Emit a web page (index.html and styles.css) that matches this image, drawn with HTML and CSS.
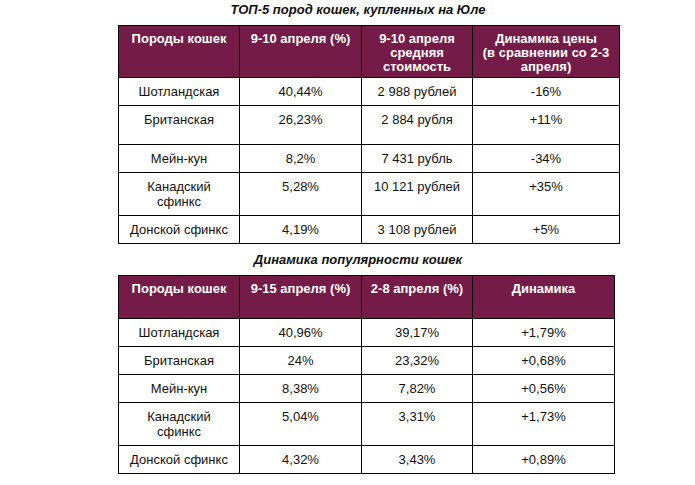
FILE: index.html
```html
<!DOCTYPE html>
<html lang="ru">
<head>
<meta charset="utf-8">
<title>Породы кошек</title>
<link rel="stylesheet" href="styles.css">
</head>
<body>
<div class="page">
  <h2 class="caption caption-first">ТОП-5 пород кошек, купленных на Юле</h2>
  <table class="grid grid-price">
    <colgroup>
      <col class="c1"><col class="c2"><col class="c3"><col class="c4">
    </colgroup>
    <thead>
      <tr class="head head-tall">
        <th>Породы кошек</th>
        <th>9-10 апреля (%)</th>
        <th>9-10 апреля<br>средняя<br>стоимость</th>
        <th>Динамика цены<br>(в сравнении со 2-3<br>апреля)</th>
      </tr>
    </thead>
    <tbody>
      <tr><td>Шотландская</td><td>40,44%</td><td>2 988 рублей</td><td>-16%</td></tr>
      <tr class="row-extra"><td>Британская</td><td>26,23%</td><td>2 884 рубля</td><td>+11%</td></tr>
      <tr><td>Мейн-кун</td><td>8,2%</td><td>7 431 рубль</td><td>-34%</td></tr>
      <tr><td>Канадский<br>сфинкс</td><td>5,28%</td><td>10 121 рублей</td><td>+35%</td></tr>
      <tr><td>Донской сфинкс</td><td>4,19%</td><td>3 108 рублей</td><td>+5%</td></tr>
    </tbody>
  </table>

  <h2 class="caption caption-second">Динамика популярности кошек</h2>
  <table class="grid grid-pop">
    <colgroup>
      <col class="c1"><col class="c2"><col class="c3"><col class="c4b">
    </colgroup>
    <thead>
      <tr class="head head-short">
        <th>Породы кошек</th>
        <th>9-15 апреля (%)</th>
        <th>2-8 апреля (%)</th>
        <th>Динамика</th>
      </tr>
    </thead>
    <tbody>
      <tr><td>Шотландская</td><td>40,96%</td><td>39,17%</td><td>+1,79%</td></tr>
      <tr><td>Британская</td><td>24%</td><td>23,32%</td><td>+0,68%</td></tr>
      <tr><td>Мейн-кун</td><td>8,38%</td><td>7,82%</td><td>+0,56%</td></tr>
      <tr><td>Канадский<br>сфинкс</td><td>5,04%</td><td>3,31%</td><td>+1,73%</td></tr>
      <tr><td>Донской сфинкс</td><td>4,32%</td><td>3,43%</td><td>+0,89%</td></tr>
    </tbody>
  </table>
</div>
</body>
</html>
```

FILE: styles.css
```css
html, body {
  margin: 0;
  padding: 0;
  background: #ffffff;
}

body {
  font-family: "Liberation Sans", Arial, sans-serif;
  color: #111111;
}

.page {
  padding: 2px 0 0 118px;
}

.caption {
  width: 480px;
  margin: 0;
  font-size: 13px;
  line-height: 15px;
  font-weight: bold;
  font-style: italic;
  text-align: center;
  color: #111111;
}

.caption-first {
  margin-bottom: 8px;
}

.caption-second {
  margin: 8px 0 8px 0;
}

.grid {
  border-collapse: collapse;
  table-layout: fixed;
  font-size: 13px;
}

.grid-price { width: 501px; }
.grid-pop { width: 496px; }

.c1 { width: 121px; }
.c2 { width: 122px; }
.c3 { width: 111px; }
.c4 { width: 147px; }
.c4b { width: 142px; }

.grid th,
.grid td {
  border: 1px solid #000000;
  text-align: center;
  vertical-align: top;
  padding: 6px 4px 6px 4px;
  line-height: 15px;
}

.grid td {
  height: 15px;
}

.grid th {
  background: #741b47;
  color: #ffffff;
  font-weight: bold;
  line-height: 14px;
  padding-top: 6px;
}

.head-tall th { height: 42px; padding-bottom: 3px; }
.head-short th { height: 14px; padding-bottom: 22px; }

.row-extra td { height: 26px; }
```
